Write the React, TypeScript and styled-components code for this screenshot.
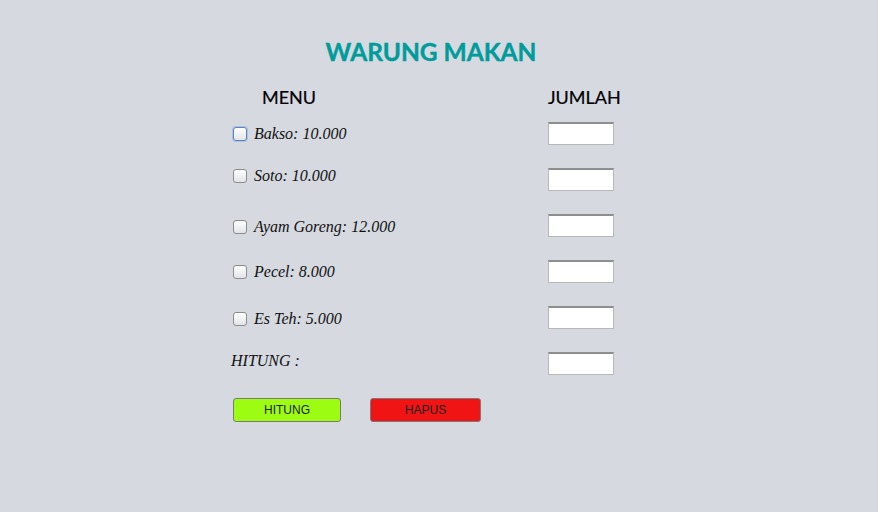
import { Fragment } from 'react'
import styled, { createGlobalStyle } from 'styled-components'

const GlobalStyle = createGlobalStyle`
  body {
    margin: 0;
    background-color: #d6d9e0;
    font-family: "Liberation Serif", serif;
  }
`;

const StyledPage = styled.div`
  width: 878px;
  height: 512px;
  padding-top: 36px;
  box-sizing: border-box;
`;

const StyledForm = styled.div`
  width: 400px;
  margin-left: 231px;
`;

const StyledTitle = styled.h1`
  margin: 0;
  height: 32px;
  line-height: 32px;
  text-align: center;
  font-family: Lato, "Open Sans", sans-serif;
  font-size: 24.5px;
  font-weight: 700;
  color: #009c9c;
  -webkit-text-stroke: 0.4px #009c9c;
`;

const StyledGrid = styled.div`
  display: grid;
  grid-template-columns: 317px 66px;
  margin-top: 16px;
`;

const StyledHeader = styled.div<{ $pad: number; $center?: boolean }>`
  height: 26px;
  line-height: 26px;
  padding-left: ${p => p.$pad}px;
  text-align: ${p => (p.$center ? 'center' : 'left')};
  white-space: nowrap;
  font-family: Lato, "Open Sans", sans-serif;
  font-size: 18px;
  color: #000;
  -webkit-text-stroke: 0.2px #000;
`;

const StyledLabel = styled.label<{ $shift: number }>`
  display: flex;
  align-items: center;
  gap: 7px;
  height: 46px;
  padding-left: 2px;
  font-style: italic;
  font-size: 16px;
  color: #111;
  position: relative;
  top: ${p => p.$shift}px;
`;

const StyledPlain = styled(StyledLabel)`
  padding-left: 0;
`;

const StyledCheck = styled.span<{ $focus?: boolean }>`
  width: 14px;
  height: 14px;
  box-sizing: border-box;
  border-radius: 3px;
  border: 1px solid ${p => (p.$focus ? '#5d86b6' : '#8c8c8c')};
  box-shadow: ${p => (p.$focus ? '0 0 0 1px #a9c3e2' : 'none')};
  background: linear-gradient(#ffffff, #e2e4e8);
`;

const StyledCell = styled.div`
  display: flex;
  align-items: center;
  height: 46px;
`;

const StyledInput = styled.input`
  width: 66px;
  height: 23px;
  box-sizing: border-box;
  margin: 0;
  padding: 0 3px;
  border: 1px solid #b8b8b8;
  border-top: 2px solid #8e8e8e;
  background: #fff;
  outline: none;
`;

const StyledButtons = styled.div`
  display: flex;
  gap: 29px;
  margin-top: 12px;
  padding-left: 2px;
`;

const StyledButton = styled.button<{ $bg: string; $w: number }>`
  width: ${p => p.$w}px;
  height: 24px;
  box-sizing: border-box;
  border: 1px solid #7a7a7a;
  border-radius: 3px;
  background: ${p => p.$bg};
  font-family: "Liberation Sans", Arial, sans-serif;
  font-size: 12px;
  color: #222;
  padding: 0;
`;

const menu = [
  { name: 'Bakso: 10.000', shift: 1, focus: true },
  { name: 'Soto: 10.000', shift: -3 },
  { name: 'Ayam Goreng: 12.000', shift: 2 },
  { name: 'Pecel: 8.000', shift: 1 },
  { name: 'Es Teh: 5.000', shift: 2 },
];

export default function App() {
  return (
    <StyledPage>
      <GlobalStyle />
      <StyledForm>
        <StyledTitle>WARUNG MAKAN</StyledTitle>
        <StyledGrid>
          <StyledHeader $pad={31}>MENU</StyledHeader>
          <StyledHeader $pad={0} $center>JUMLAH</StyledHeader>
          {menu.map(m => (
            <Fragment key={m.name}>
              <StyledLabel $shift={m.shift}>
                <StyledCheck $focus={m.focus} />
                {m.name}
              </StyledLabel>
              <StyledCell>
                <StyledInput type="text" />
              </StyledCell>
            </Fragment>
          ))}
          <StyledPlain $shift={-2}>HITUNG :</StyledPlain>
          <StyledCell>
            <StyledInput type="text" />
          </StyledCell>
        </StyledGrid>
        <StyledButtons>
          <StyledButton $bg="#9cfc12" $w={108}>HITUNG</StyledButton>
          <StyledButton $bg="#f01414" $w={111}>HAPUS</StyledButton>
        </StyledButtons>
      </StyledForm>
    </StyledPage>
  )
}
